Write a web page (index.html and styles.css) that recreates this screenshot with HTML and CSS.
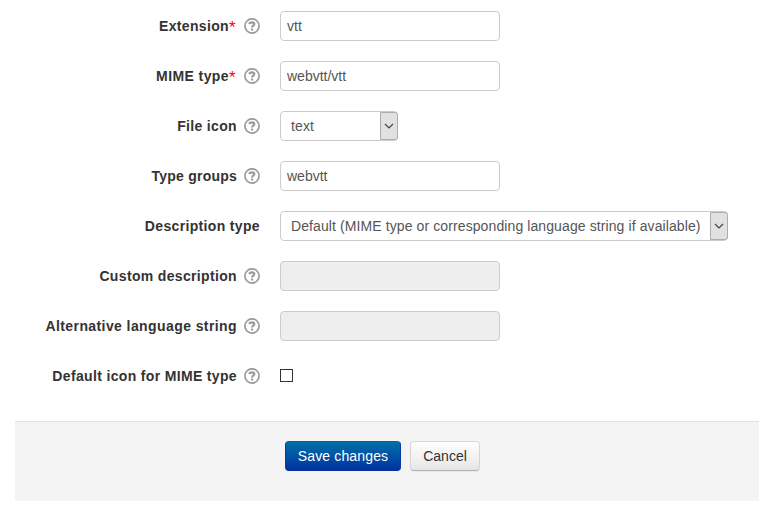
FILE: index.html
```html
<!DOCTYPE html>
<html lang="en">
<head>
<meta charset="utf-8">
<title>File type</title>
<link rel="stylesheet" href="styles.css">
</head>
<body>
<svg class="defs" aria-hidden="true">
  <symbol id="help" viewBox="0 0 16 16">
    <circle cx="8" cy="8" r="7.100" fill="none" stroke="#999" stroke-width="1.700"/>
    <path d="M5.400 6.200C5.600 4.800 6.700 4.300 8 4.300c1.500 0 2.300.7 2.300 1.800C10.300 7.700 8.100 7.600 8.100 9.500" fill="none" stroke="#999" stroke-width="2.200"/>
    <rect x="7" y="10.500" width="2.200" height="2.100" rx=".4" fill="#999"/>
  </symbol>
  <symbol id="chevron" viewBox="0 0 10 6">
    <path d="M1 1l4 4 4-4" fill="none" stroke="#444" stroke-width="1.200"/>
  </symbol>
</svg>
<form class="form">
  <div class="row">
    <div class="label"><label for="extension">Extension<span class="req">*</span></label><svg class="help"><use href="#help"/></svg></div>
    <input class="field" id="extension" type="text" value="vtt">
  </div>
  <div class="row">
    <div class="label wide"><label for="mimetype">MIME type<span class="req">*</span></label><svg class="help"><use href="#help"/></svg></div>
    <input class="field" id="mimetype" type="text" value="webvtt/vtt">
  </div>
  <div class="row">
    <div class="label"><label>File icon</label><svg class="help"><use href="#help"/></svg></div>
    <div class="select icon-select"><span class="value">text</span><span class="arrow"><svg><use href="#chevron"/></svg></span></div>
  </div>
  <div class="row">
    <div class="label narrow"><label for="groups">Type groups</label><svg class="help"><use href="#help"/></svg></div>
    <input class="field" id="groups" type="text" value="webvtt">
  </div>
  <div class="row">
    <div class="label"><label>Description type</label></div>
    <div class="select description-select"><span class="value">Default (MIME type or corresponding language string if available)</span><span class="arrow"><svg><use href="#chevron"/></svg></span></div>
  </div>
  <div class="row">
    <div class="label"><label for="description">Custom description</label><svg class="help"><use href="#help"/></svg></div>
    <input class="field" id="description" type="text" disabled>
  </div>
  <div class="row">
    <div class="label wide"><label for="langstring">Alternative language string</label><svg class="help"><use href="#help"/></svg></div>
    <input class="field" id="langstring" type="text" disabled>
  </div>
  <div class="row">
    <div class="label"><label for="defaulticon">Default icon for MIME type</label><svg class="help"><use href="#help"/></svg></div>
    <input class="check" id="defaulticon" type="checkbox">
  </div>
  <div class="actions">
    <button class="btn primary" type="button">Save changes</button>
    <button class="btn cancel" type="button">Cancel</button>
  </div>
</form>
</body>
</html>
```

FILE: styles.css
```css
* { box-sizing: border-box; }
body {
  margin: 0;
  background: #fff;
  color: #333;
  font: 14px/20px "Liberation Sans", Arial, sans-serif;
}
.defs { display: none; }
.form {
  display: flex;
  flex-direction: column;
  gap: 20px;
  padding: 11px 14px 0 15px;
}
.row {
  display: flex;
  align-items: center;
  gap: 20px;
  height: 30px;
}
.label {
  display: flex;
  align-items: center;
  justify-content: flex-end;
  gap: 7px;
  width: 245px;
  font-weight: bold;
  letter-spacing: .34px;
  white-space: nowrap;
}
.wide { letter-spacing: .41px; }
.narrow { letter-spacing: .23px; }
.req {
  display: inline-block;
  width: 8px;
  color: #f00;
  font-size: 17px;
  font-weight: normal;
  line-height: 16px;
  vertical-align: -2px;
}
.help { width: 16px; height: 16px; flex: none; }
.field {
  width: 220px;
  height: 30px;
  margin: 0;
  padding: 4px 6px;
  border: 1px solid #ccc;
  border-radius: 4px;
  background: #fff;
  color: #555;
  font: inherit;
}
.field:disabled { background: #eee; }
.select {
  display: flex;
  height: 30px;
  border: 1px solid #ccc;
  border-radius: 4px;
  color: #555;
  letter-spacing: .1px;
  white-space: nowrap;
}
.icon-select { width: 118px; }
.description-select { width: 448px; }
.value { flex: 1; padding: 4px 0 4px 10px; }
.arrow {
  display: flex;
  align-items: center;
  justify-content: center;
  width: 18px;
  margin-right: -1px;
  padding-right: 1px;
  border: 1px solid #adadad;
  border-radius: 0 3px 3px 0;
  background: #e1e1e1;
}
.arrow svg { width: 10px; height: 6px; }
.check {
  appearance: none;
  width: 13px;
  height: 13px;
  margin: 0 0 2px;
  border: 1px solid #333;
  background: #fff;
}
.actions {
  display: flex;
  gap: 9px;
  height: 80px;
  margin-top: 10px;
  padding: 19px 0 0 270px;
  border-top: 1px solid #e3e3e3;
  background: #f4f4f4;
}
.btn {
  height: 30px;
  padding: 0;
  border: 1px solid;
  border-radius: 4px;
  font: inherit;
}
.primary {
  width: 116px;
  border-color: #0068a0 #003ca3 #00308f;
  background: linear-gradient(#0070a8, #0033a0);
  color: #fff;
  letter-spacing: .15px;
}
.cancel {
  width: 70px;
  border-color: #d9d9d9 #d5d5d5 #b3b3b3;
  background: linear-gradient(#fff, #e6e6e6);
  box-shadow: 0 1px 1px rgba(0, 0, 0, .05);
  color: #333;
}
```
